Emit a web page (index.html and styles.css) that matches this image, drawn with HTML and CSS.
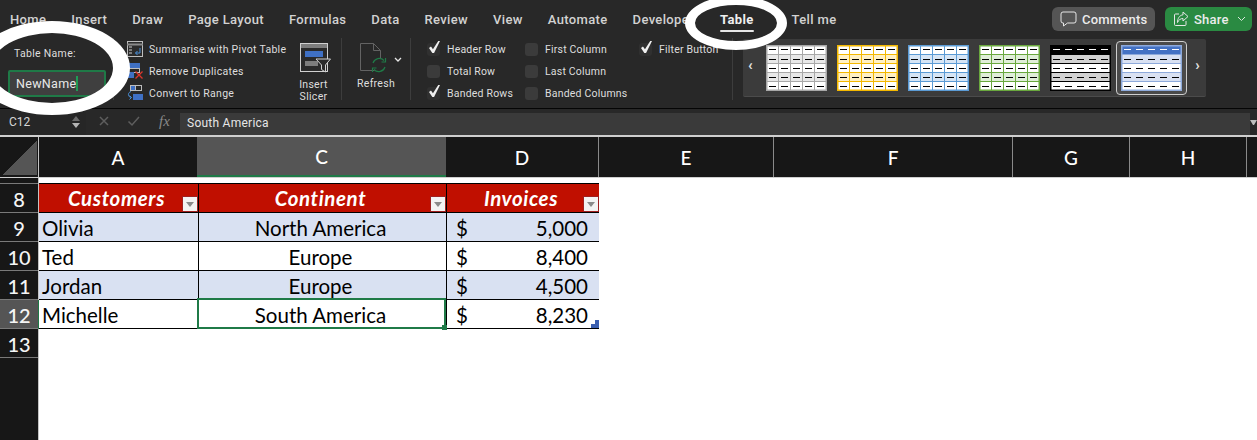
FILE: index.html
```html
<!DOCTYPE html>
<html lang="en">
<head>
<meta charset="utf-8">
<title>Excel table name</title>
<link rel="stylesheet" href="styles.css">
</head>
<body>
<svg class="defs" width="0" height="0" aria-hidden="true">
  <symbol id="t-grid" viewBox="0 0 61 46">
    <rect class="base" width="61" height="46"/>
    <rect class="band" y="9.500" width="61" height="9"/>
    <rect class="band" y="27.500" width="61" height="9"/>
    <path class="grid" d="M12.500 0v46M24.500 0v46M36.500 0v46M48.500 0v46M0 9.500h61M0 18.500h61M0 27.500h61M0 36.500h61"/>
    <rect class="frame" x=".75" y=".75" width="59.500" height="44.500"/>
    <path class="dash" d="M3 4.500h7M15 4.500h7M27 4.500h7M39 4.500h7M51 4.500h7M3 14.500h7M15 14.500h7M27 14.500h7M39 14.500h7M51 14.500h7M3 23.500h7M15 23.500h7M27 23.500h7M39 23.500h7M51 23.500h7M3 32.500h7M15 32.500h7M27 32.500h7M39 32.500h7M51 32.500h7M3 41.500h7M15 41.500h7M27 41.500h7M39 41.500h7M51 41.500h7"/>
  </symbol>
  <symbol id="t-rows" viewBox="0 0 61 46">
    <rect class="base" width="61" height="46"/>
    <rect class="head" width="61" height="9.500"/>
    <rect class="band" y="9.500" width="61" height="9"/>
    <rect class="band" y="27.500" width="61" height="9"/>
    <path class="grid" d="M0 9.500h61M0 18.500h61M0 27.500h61M0 36.500h61"/>
    <rect class="frame" x=".75" y=".75" width="59.500" height="44.500"/>
    <path class="dash head-dash" d="M3 4.500h7M15 4.500h7M27 4.500h7M39 4.500h7M51 4.500h7"/>
    <path class="dash" d="M3 14.500h7M15 14.500h7M27 14.500h7M39 14.500h7M51 14.500h7M3 23.500h7M15 23.500h7M27 23.500h7M39 23.500h7M51 23.500h7M3 32.500h7M15 32.500h7M27 32.500h7M39 32.500h7M51 32.500h7M3 41.500h7M15 41.500h7M27 41.500h7M39 41.500h7M51 41.500h7"/>
  </symbol>
</svg>

<header class="tabs">
  <span class="tab">Home</span>
  <span class="tab">Insert</span>
  <span class="tab">Draw</span>
  <span class="tab">Page Layout</span>
  <span class="tab">Formulas</span>
  <span class="tab">Data</span>
  <span class="tab">Review</span>
  <span class="tab">View</span>
  <span class="tab">Automate</span>
  <span class="tab">Developer</span>
  <span class="tab tab-active">Table</span>
  <span class="tab">Tell me</span>
  <div class="actions">
    <button class="btn btn-comments">
      <svg width="17" height="16" viewBox="0 0 17 16" class="btn-icon"><path d="M3 1h11a2 2 0 0 1 2 2v7a2 2 0 0 1-2 2H7.500L3.500 15v-3H3a2 2 0 0 1-2-2V3a2 2 0 0 1 2-2z" fill="none" stroke="#e6e6e6" stroke-width="1"/></svg>
      Comments
    </button>
    <button class="btn btn-share">
      <svg width="16" height="16" viewBox="0 0 16 16" class="btn-icon"><path d="M6 3H2.500a1 1 0 0 0-1 1v9.500a1 1 0 0 0 1 1H12a1 1 0 0 0 1-1V10" fill="none" stroke="#e6e6e6"/><path d="M10 1l5 4.500-5 4.500V7.500C7.500 7.500 5.500 9 4.500 11.500 4.500 7.500 6.500 4.200 10 3.800z" fill="none" stroke="#e6e6e6"/></svg>
      Share
      <svg width="9" height="6" viewBox="0 0 9 6" class="share-caret"><path d="M1 1l3.500 3.500L8 1" fill="none" stroke="#d8e8dc"/></svg>
    </button>
  </div>
</header>

<section class="ribbon">
  <div class="group group-name">
    <label class="name-label">Table Name:</label>
    <div class="name-input"><span>NewName</span><i class="caret"></i></div>
  </div>

  <div class="group group-tools">
    <div class="tool">
      <svg width="16" height="16" viewBox="0 0 16 16"><rect x=".5" y=".5" width="15" height="15" fill="#2c2c2c" stroke="#bdbdbd"/><path d="M0 3.500h16" stroke="#8a8a8a" stroke-width="2"/><path d="M2 6h3M2 9h3M2 12h3" stroke="#cfcfcf"/><path d="M13 7v5H8.500M10.500 10l-2 2 2 2" fill="none" stroke="#4a90d9"/></svg>
      <span>Summarise with Pivot Table</span>
    </div>
    <div class="tool">
      <svg width="16" height="16" viewBox="0 0 16 16"><rect x=".5" y=".5" width="12" height="5" fill="#3f70c4" stroke="#3f70c4"/><rect x=".5" y="5.500" width="12" height="4" fill="none" stroke="#bdbdbd"/><rect x=".5" y="9.500" width="6" height="5" fill="#3f70c4" stroke="#3f70c4"/><path d="M8.500 8.500l7 7M15.500 8.500l-7 7" stroke="#e0352b" stroke-width="1.300"/></svg>
      <span>Remove Duplicates</span>
    </div>
    <div class="tool">
      <svg width="16" height="16" viewBox="0 0 16 16"><rect x="3.500" y=".5" width="5" height="5" fill="#3f70c4" stroke="#bdbdbd"/><rect x="8.500" y=".5" width="6" height="5" fill="none" stroke="#bdbdbd"/><rect x="6" y="9" width="10" height="6" fill="#3f70c4"/><path d="M4 6.500C.5 7.500.5 12 4.500 12.500M2.500 10.500l2 2-2 2" fill="none" stroke="#4a90d9"/></svg>
      <span>Convert to Range</span>
    </div>
  </div>

  <div class="group group-slicer">
    <svg width="31" height="30" viewBox="0 0 31 30"><rect x=".5" y=".5" width="27" height="28" fill="#2a2a2a" stroke="#d0d0d0"/><rect x="1" y="1" width="26" height="4" fill="#7d7d7d"/><rect x="5" y="8" width="18" height="6" fill="#3f70c4"/><rect x="5" y="18" width="13" height="5" fill="#7d7d7d"/><path d="M16 16h14.500l-5 6v7l-4-2.500V22z" fill="#2a2a2a" stroke="#d0d0d0" stroke-linejoin="round"/></svg>
    <span class="big-label">Insert<br>Slicer</span>
  </div>

  <div class="group group-refresh">
    <div class="refresh-icon">
      <svg width="27" height="30" viewBox="0 0 27 30"><path d="M.5.5h13l7 7v20H.5z" fill="#282828" stroke="#636363"/><path d="M13.500.5v7h7" fill="none" stroke="#636363"/><circle cx="19" cy="22" r="7" fill="#282828"/><path d="M13 20a6.500 6.500 0 0 1 11-2.500M25 24a6.500 6.500 0 0 1-11 2.500" fill="none" stroke="#1f7a47" stroke-width="1.200"/><path d="M25.500 15v4h-4M12.500 29v-4h4" fill="none" stroke="#1f7a47" stroke-width="1.200"/></svg>
      <svg class="refresh-caret" width="8" height="6" viewBox="0 0 8 6"><path d="M1 1l3 3 3-3" fill="none" stroke="#e6e6e6" stroke-width="1.300"/></svg>
    </div>
    <span class="big-label">Refresh</span>
  </div>

  <div class="group group-checks">
    <div class="check-col col1">
      <div class="check on"><i class="box"></i><span>Header Row</span></div>
      <div class="check"><i class="box"></i><span>Total Row</span></div>
      <div class="check on"><i class="box"></i><span>Banded Rows</span></div>
    </div>
    <div class="check-col col2">
      <div class="check"><i class="box"></i><span>First Column</span></div>
      <div class="check"><i class="box"></i><span>Last Column</span></div>
      <div class="check"><i class="box"></i><span>Banded Columns</span></div>
    </div>
    <div class="check-col col3">
      <div class="check on"><i class="box"></i><span>Filter Button</span></div>
    </div>
  </div>

  <div class="gallery">
    <span class="gal-arrow">‹</span>
    <svg class="thumb t-gray"><use href="#t-grid"/></svg>
    <svg class="thumb t-gold"><use href="#t-grid"/></svg>
    <svg class="thumb t-blue"><use href="#t-grid"/></svg>
    <svg class="thumb t-green"><use href="#t-grid"/></svg>
    <svg class="thumb t-black"><use href="#t-rows"/></svg>
    <div class="thumb-sel"><svg class="thumb t-indigo"><use href="#t-rows"/></svg></div>
    <span class="gal-arrow gal-next">›</span>
  </div>
</section>

<section class="formula">
  <div class="namebox">
    <span>C12</span>
    <span class="stepper"><i class="up"></i><i class="down"></i></span>
  </div>
  <div class="fx-tools">
    <svg width="12" height="12" viewBox="0 0 12 12"><path d="M2 2l8 8M10 2l-8 8" stroke="#5e5e5e" stroke-width="1.500"/></svg>
    <svg width="13" height="12" viewBox="0 0 13 12"><path d="M1.500 6.500l3.500 3.500 7-8" fill="none" stroke="#5e5e5e" stroke-width="1.500"/></svg>
    <span class="fx">fx</span>
  </div>
  <div class="formula-input">South America</div>
  <i class="formula-drop"></i>
</section>

<section class="columns">
  <div class="corner"><i></i></div>
  <div class="colhead">A</div>
  <div class="colhead selected">C</div>
  <div class="colhead">D</div>
  <div class="colhead">E</div>
  <div class="colhead">F</div>
  <div class="colhead">G</div>
  <div class="colhead">H</div>
  <div class="colhead"></div>
</section>

<main class="sheet">
  <div class="rowheads">
    <div class="rowhead stub"></div>
    <div class="rowhead">8</div>
    <div class="rowhead">9</div>
    <div class="rowhead">10</div>
    <div class="rowhead">11</div>
    <div class="rowhead selected">12</div>
    <div class="rowhead">13</div>
    <div class="rowhead fill"></div>
  </div>
  <div class="table">
    <div class="cell th">Customers<i class="filter"></i></div>
    <div class="cell th">Continent<i class="filter"></i></div>
    <div class="cell th">Invoices<i class="filter"></i></div>

    <div class="cell band">Olivia</div>
    <div class="cell band mid">North America</div>
    <div class="cell band money"><span>$</span><span>5,000</span></div>

    <div class="cell">Ted</div>
    <div class="cell mid">Europe</div>
    <div class="cell money"><span>$</span><span>8,400</span></div>

    <div class="cell band">Jordan</div>
    <div class="cell band mid">Europe</div>
    <div class="cell band money"><span>$</span><span>4,500</span></div>

    <div class="cell">Michelle</div>
    <div class="cell mid active">South America</div>
    <div class="cell money last"><span>$</span><span>8,230</span></div>
  </div>
</main>

<svg class="marks" width="1257" height="440" viewBox="0 0 1257 440" aria-hidden="true">
  <path class="mark" fill-rule="evenodd" d="M-26 68a78 47 0 1 0 156 0a78 47 0 1 0-156 0zM-9 68a61 35 0 1 1 122 0a61 35 0 1 1-122 0z"/>
  <path class="mark" fill-rule="evenodd" d="M685 23a51 27 0 1 0 102 0a51 27 0 1 0-102 0zM695 23a41 18 0 1 1 82 0a41 18 0 1 1-82 0z"/>
</svg>
</body>
</html>
```

FILE: styles.css
```css
* { box-sizing: border-box; }
html, body { margin: 0; height: 100%; }
body {
  position: relative;
  width: 1257px;
  height: 440px;
  overflow: hidden;
  background: #fff;
  color: #e4e4e4;
  font-family: "Roboto", "Liberation Sans", sans-serif;
  display: flex;
  flex-direction: column;
}
i { display: block; font-style: normal; }
svg { flex: none; }
.defs { position: absolute; }

/* Tabs */
.tabs {
  height: 38px;
  background: #282828;
  display: flex;
  align-items: center;
  gap: 25px;
  padding-left: 10px;
  font-size: 13px;
  font-weight: 500;
  letter-spacing: .35px;
  color: #d2d2d2;
}
.tab { position: relative; white-space: nowrap; }
.tab-active { color: #efefef; font-weight: 700; margin: 0 13px 0 1px; }
.tab-active::after {
  content: "";
  position: absolute;
  left: 0; right: 0;
  bottom: -5px;
  height: 2px;
  background: #e6e6e6;
  border-radius: 1px;
}
.actions {
  margin-left: auto;
  display: flex;
  gap: 10px;
  padding-right: 5px;
}
.btn {
  height: 24px;
  border: 0;
  border-radius: 6px;
  display: flex;
  align-items: center;
  gap: 5px;
  color: #ececec;
  font: 500 13px "Roboto", sans-serif;
  letter-spacing: .2px;
  padding: 0 8px;
}
.btn-comments { width: 103px; background: #555; }
.btn-share { width: 87px; background: #2a8a42; }
.share-caret { margin-left: 3px; }

/* Ribbon */
.ribbon {
  height: 71px;
  background: #282828;
  border-bottom: 1px solid #050505;
  display: flex;
  font-size: 10.500px;
  letter-spacing: .3px;
  color: #dedede;
}
.group { height: 62px; }
.group-name {
  width: 114px;
  border-right: 1px solid #3d3d3d;
  padding: 10px 0 0 14px;
  display: flex;
  flex-direction: column;
}
.name-label { font-size: 10.500px; line-height: 12px; }
.name-input {
  margin: 10px 0 0 -6px;
  width: 98px;
  height: 27px;
  flex: none;
  border: 2px solid #1f7a47;
  border-radius: 2px;
  background: #3f3f3f;
  display: flex;
  align-items: center;
  padding: 0 0 0 6px;
  font-size: 12.500px;
  color: #e8e8e8;
}
.caret { width: 2px; height: 15px; background: #1f9a55; }
.group-tools {
  width: 167px;
  padding: 3px 0 0 13px;
  display: flex;
  flex-direction: column;
  gap: 6px;
}
.tool {
  height: 16px;
  flex: none;
  display: flex;
  align-items: center;
  gap: 6px;
  white-space: nowrap;
}
.group-slicer {
  width: 61px;
  border-right: 1px solid #3d3d3d;
  padding: 5px 0 0 19px;
  display: flex;
  flex-direction: column;
}
.big-label {
  line-height: 12px;
  margin-top: 6px;
  display: block;
  text-align: center;
  width: 31px;
}
.group-slicer .big-label { margin-left: -2px; }
.group-refresh {
  width: 69px;
  border-right: 1px solid #3d3d3d;
  padding: 5px 0 0 15px;
  display: flex;
  flex-direction: column;
}
.refresh-icon { display: flex; align-items: flex-start; gap: 7px; height: 30px; margin-left: 3px; }
.refresh-caret { margin-top: 14px; }
.group-refresh .big-label { width: 38px; margin-top: 5px; }
.group-checks {
  width: 322px;
  border-right: 1px solid #3d3d3d;
  padding: 3px 0 0 16px;
  display: flex;
  letter-spacing: .2px;
}
.check-col { display: flex; flex-direction: column; gap: 6px; }
.col1 { width: 98px; }
.col2 { width: 114px; }
.check {
  position: relative;
  height: 16px;
  flex: none;
  display: flex;
  align-items: center;
  gap: 7px;
  white-space: nowrap;
}
.box {
  width: 13px;
  height: 13px;
  border-radius: 3px;
  background: #3b3b3b;
}
.check.on .box { background: #303030; }
.check.on::before {
  content: "";
  position: absolute;
  left: 2px;
  top: 0;
  width: 11px;
  height: 12px;
  background: #f0f0f0;
  clip-path: polygon(0 58%, 18% 46%, 36% 68%, 84% 0, 100% 0, 46% 100%, 30% 100%);
}

/* Gallery */
.gallery {
  margin: 1px 0 0 10px;
  width: 463px;
  height: 58px;
  background: #3b3b3b;
  border-radius: 2px;
  border-bottom: 1px solid #4b4b4b;
  display: flex;
  align-items: center;
  gap: 10px;
  padding: 0 6px 0 5px;
}
.gal-arrow {
  flex: none;
  width: 8px;
  margin-bottom: 5px;
  font-size: 15px;
  line-height: 16px;
  font-weight: 700;
  color: #e6e6e6;
}
.gal-next { margin-left: auto; text-align: right; }
.thumb {
  width: 61px;
  height: 46px;
  --base: #fff;
  --head: #fff;
  --band: #eee;
  --line: #ababab;
  --dash: #000;
  --headdash: #fff;
}
.base { fill: var(--base); }
.band { fill: var(--band); }
.head { fill: var(--head); }
.grid { stroke: var(--line); stroke-width: 1; fill: none; }
.frame { stroke: var(--line); stroke-width: 1.500; fill: none; }
.dash { stroke: var(--dash); stroke-width: 1; fill: none; }
.head-dash { stroke: var(--headdash); }
.t-gray { --band: #e8e8e8; --line: #a8a8a8; }
.t-gold { --band: #fff0c4; --line: #f4b800; }
.t-blue { --band: #d6e5f5; --line: #5b9bd5; }
.t-green { --band: #e0eed8; --line: #6aa83e; }
.t-black { --head: #000; --band: #d2d2d2; --line: #000; }
.t-indigo { --head: #4472c4; --band: #d9e1f2; --line: #8eaadb; }
.thumb-sel {
  flex: none;
  margin-left: -5px;
  margin-right: -5px;
  width: 71px;
  height: 54px;
  border: 1px solid #cfcfcf;
  border-radius: 4px;
  background: #4a4a4a;
  display: flex;
  align-items: center;
  justify-content: center;
}

/* Formula bar */
.formula {
  height: 26px;
  background: #282828;
  display: flex;
}
.namebox {
  width: 86px;
  display: flex;
  justify-content: space-between;
  align-items: center;
  padding: 0 6px 1px 9px;
  font-size: 12px;
  color: #d6d6d6;
  background: #262626;
}
.stepper { display: flex; flex-direction: column; gap: 2px; }
.up, .down { width: 0; height: 0; border-left: 4px solid transparent; border-right: 4px solid transparent; }
.up { border-bottom: 5px solid #6b6b6b; }
.down { border-top: 5px solid #b5b5b5; }
.fx-tools {
  width: 94px;
  display: flex;
  align-items: center;
  gap: 17px;
  padding: 0 0 2px 12px;
}
.fx {
  font: italic 15px "Liberation Serif", serif;
  color: #8a8a8a;
  margin-left: 2px;
}
.formula-input {
  flex: 1;
  margin-top: 4px;
  background: #3a3a3a;
  font-size: 12px;
  letter-spacing: .25px;
  color: #e6e6e6;
  padding: 3px 0 0 7px;
}
.formula-drop {
  flex: none;
  width: 7px;
  height: 5px;
  margin-top: 11px;
  border-left: 3.500px solid transparent;
  border-right: 3.500px solid transparent;
  border-top: 5px solid #bdbdbd;
}

/* Column headers */
.columns {
  height: 43px;
  background: #171717;
  border-top: 2px solid #cfcfcf;
  border-bottom: 1px solid #cfcfcf;
  display: grid;
  grid-template-columns: 39px 159px 248px 153px 175px 239px 117px 117px 1fr;
  font-family: "Lato", sans-serif;
  font-size: 19px;
  font-weight: 500;
  color: #fff;
}
.corner {
  border-right: 1px solid #c4c4c4;
  padding: 3px 1px 2px 2px;
}
.corner i {
  height: 100%;
  background: linear-gradient(to bottom right, transparent 50%, #555 50%);
}
.colhead {
  display: flex;
  align-items: center;
  justify-content: center;
  border-right: 1px solid #8a8a8a;
}
.colhead.selected {
  background: #555;
  border-right: 0;
  border-bottom: 2px solid #1f7a47;
  margin-left: -1px;
}
.colhead:last-child { border-right: 0; }

/* Sheet */
.sheet {
  flex: 1;
  display: flex;
  background: #fff;
  min-height: 0;
}
.rowheads {
  width: 39px;
  background: #171717;
  border-right: 1px solid #c4c4c4;
  display: flex;
  flex-direction: column;
  font-family: "Lato", sans-serif;
  font-size: 20px;
  font-weight: 500;
  color: #f5f5f5;
}
.rowhead {
  height: 29px;
  flex: none;
  display: flex;
  align-items: center;
  justify-content: center;
  padding-top: 1px;
  border-bottom: 1px solid #7a7a7a;
}
.rowhead.stub { height: 6px; padding: 0; }
.rowhead.selected { background: #555; box-shadow: 1px 0 0 #1f7a47; }
.rowhead.fill { flex: 1; border-bottom: 0; }

.table {
  margin-top: 5px;
  align-self: flex-start;
  width: 560px;
  display: grid;
  grid-template-columns: 160px 248px 152px;
  grid-auto-rows: 29px;
  border-top: 1px solid #000;
  border-right: 1px solid #000;
  font-family: "Lato", sans-serif;
  font-size: 20.500px;
  color: #000;
}
.cell {
  position: relative;
  display: flex;
  align-items: center;
  padding: 1px 3px 0;
  border-right: 1px solid #000;
  border-bottom: 1px solid #000;
  background: #fff;
}
.cell:nth-child(3n) { border-right: 0; }
.cell.band { background: #d9e1f2; }
.cell.mid { justify-content: center; padding: 1px 4px 0 0; }
.cell.th {
  justify-content: center;
  padding: 0 4px 0 0;
  background: #c00f00;
  color: #fff;
  font-weight: 700;
  font-style: italic;
  letter-spacing: .6px;
}
.filter {
  position: absolute;
  right: 0;
  bottom: 0;
  width: 16px;
  height: 16px;
  background: #f3f3f3;
  border: 1px solid #a02020;
}
.filter::after {
  content: "";
  position: absolute;
  left: 3px;
  top: 5px;
  border-left: 4px solid transparent;
  border-right: 4px solid transparent;
  border-top: 5px solid #8a8a8a;
}
.cell.money { justify-content: space-between; padding: 1px 11px 0 9px; }
.cell.active { z-index: 1; }
.cell.active::before {
  content: "";
  position: absolute;
  left: -2px;
  right: 0;
  top: -2px;
  bottom: -1px;
  border: 2px solid #1f7a47;
}
.cell.active::after {
  content: "";
  position: absolute;
  right: -1px;
  bottom: -2px;
  width: 5px;
  height: 5px;
  background: #1f7a47;
}
.cell.last::after {
  content: "";
  position: absolute;
  right: 0;
  bottom: 0;
  width: 8px;
  height: 8px;
  background: #3b5fb0;
  clip-path: polygon(100% 0, 100% 100%, 0 100%, 0 50%, 50% 50%, 50% 0);
}

/* Hand-drawn highlights over the screenshot */
.marks {
  position: absolute;
  left: 0;
  top: 0;
  pointer-events: none;
}
.mark { fill: #fff; }
```
